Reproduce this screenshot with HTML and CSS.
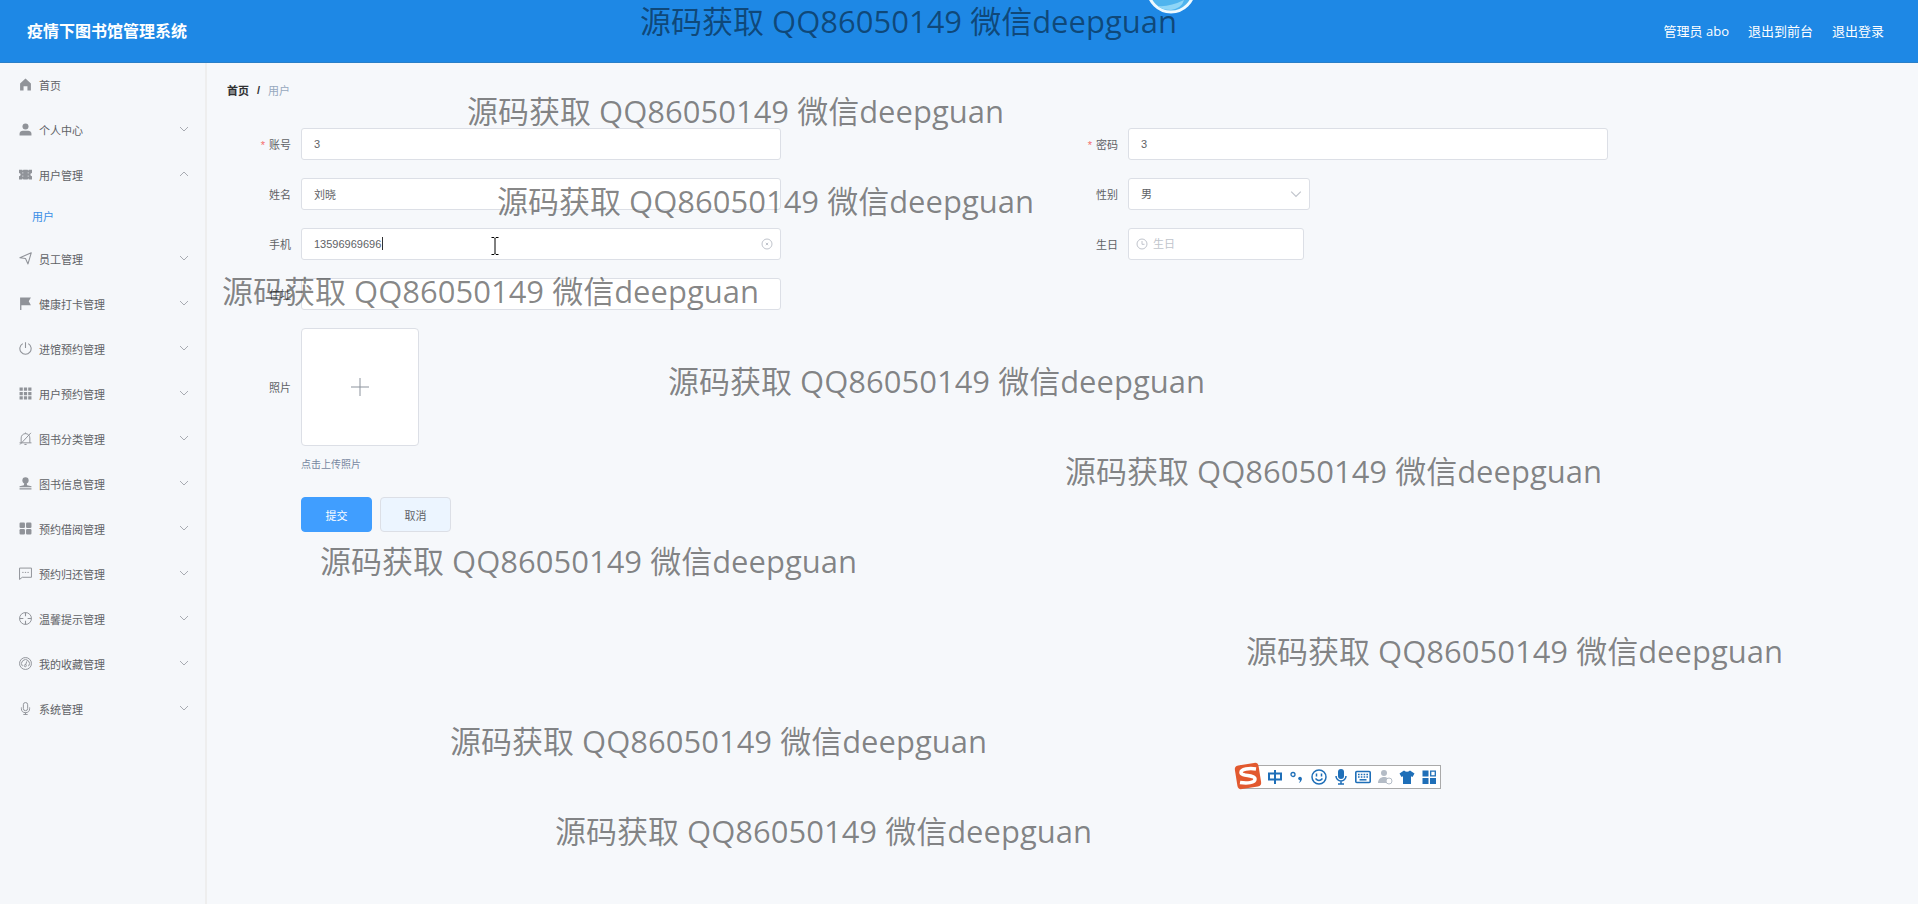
FILE: index.html
```
<!DOCTYPE html>
<html lang="zh-CN">
<head>
    <meta charset="UTF-8">
    <meta name="viewport" content="width=device-width, initial-scale=1.0">
    <title>疫情下图书馆管理系统</title>
    <link rel="stylesheet" href="styles.css">
</head>
<body>

<svg class="sprite" aria-hidden="true">
    <symbol id="down" viewBox="0 0 10 10"><path d="M1 3l4 4 4-4" fill="none" stroke="currentColor"/></symbol>
    <symbol id="up" viewBox="0 0 10 10"><path d="M1 7l4-4 4 4" fill="none" stroke="currentColor"/></symbol>
</svg>

<header class="header">
    <h1 class="title">疫情下图书馆管理系统</h1>
    <nav class="user-nav">
        <span>管理员 abo</span>
        <a href="#">退出到前台</a>
        <a href="#">退出登录</a>
    </nav>
</header>

<div class="container">
    <aside class="sidebar">
        <nav class="menu">
            <a class="menu-item" href="#">
                <svg class="icon" viewBox="0 0 12 12"><path fill="currentColor" d="M6 .5l5 4.500v6.500H7.800V7.500H4.200v4H1V5z"/></svg>
                首页
            </a>
            <a class="menu-item" href="#">
                <svg class="icon" viewBox="0 0 12 12"><circle cx="6" cy="3.300" r="2.800" fill="currentColor"/><path fill="currentColor" d="M.5 11.500V10c0-2 1.500-2.800 3-2.800h5c1.500 0 3 .8 3 2.800v1.500z"/></svg>
                个人中心
                <svg class="arrow"><use href="#down"/></svg>
            </a>
            <a class="menu-item" href="#">
                <svg class="icon" viewBox="0 0 12 12"><path fill="currentColor" d="M0 1.500h3l.5 1 .5-1h4l.5 1 .5-1h3v3a1.500 1.500 0 0 0 0 3v3H9l-.5-1-.5 1H4l-.5-1-.5 1H0v-3a1.500 1.500 0 0 0 0-3z"/><path d="M3.500 4v1m0 2v1m5-4v1m0 2v1" stroke="#f5f7fa" stroke-width=".7"/></svg>
                用户管理
                <svg class="arrow"><use href="#up"/></svg>
            </a>
            <a class="submenu-item" href="#">用户</a>
            <a class="menu-item" href="#">
                <svg class="icon" viewBox="0 0 12 12"><path d="M.8 5.300L11.300.7 8.300 11 6 6z" fill="none" stroke="currentColor" stroke-linejoin="round"/></svg>
                员工管理
                <svg class="arrow"><use href="#down"/></svg>
            </a>
            <a class="menu-item" href="#">
                <svg class="icon" viewBox="0 0 12 12"><path fill="currentColor" d="M1 .5h10L9 4l2 3.500H2.200V12H1z"/></svg>
                健康打卡管理
                <svg class="arrow"><use href="#down"/></svg>
            </a>
            <a class="menu-item" href="#">
                <svg class="icon" viewBox="0 0 12 12"><path d="M3.500 1.500a5.200 5.200 0 1 0 5 0M6 .3v5.200" fill="none" stroke="currentColor"/></svg>
                进馆预约管理
                <svg class="arrow"><use href="#down"/></svg>
            </a>
            <a class="menu-item" href="#">
                <svg class="icon" viewBox="0 0 12 12"><path fill="currentColor" d="M.5.5h3v3h-3zM4.500.5h3v3h-3zM8.500.5h3v3h-3zM.5 4.500h3v3h-3zM4.500 4.500h3v3h-3zM8.500 4.500h3v3h-3zM.5 8.500h3v3h-3zM4.500 8.500h3v3h-3zM8.500 8.500h3v3h-3z"/></svg>
                用户预约管理
                <svg class="arrow"><use href="#down"/></svg>
            </a>
            <a class="menu-item" href="#">
                <svg class="icon" viewBox="0 0 12 12"><path d="M.5 10h11M2 10V5.500a4 4 0 0 1 8 0V10M6 1.500V.5M5 11.500h2M1 11.500L11 .8" fill="none" stroke="currentColor" stroke-width=".9"/></svg>
                图书分类管理
                <svg class="arrow"><use href="#down"/></svg>
            </a>
            <a class="menu-item" href="#">
                <svg class="icon" viewBox="0 0 12 12"><circle cx="6" cy="3.200" r="2.900" fill="currentColor"/><path fill="currentColor" d="M5 5h2l.5 2.500 4 1v1H.5v-1l4-1zM.5 10.300h11v1.200H.5z"/></svg>
                图书信息管理
                <svg class="arrow"><use href="#down"/></svg>
            </a>
            <a class="menu-item" href="#">
                <svg class="icon" viewBox="0 0 12 12"><g fill="currentColor"><rect x=".5" y=".5" width="5" height="5" rx="1"/><rect x="6.500" y=".5" width="5" height="5" rx="1"/><rect x=".5" y="6.500" width="5" height="5" rx="1"/><rect x="6.500" y="6.500" width="5" height="5" rx="1"/></g></svg>
                预约借阅管理
                <svg class="arrow"><use href="#down"/></svg>
            </a>
            <a class="menu-item" href="#">
                <svg class="icon" viewBox="0 0 12 12"><path d="M.5 1h11v8.500H3L.5 11.500zM3 5h1.200M5.400 5h1.200M7.800 5H9" fill="none" stroke="currentColor" stroke-width=".9"/></svg>
                预约归还管理
                <svg class="arrow"><use href="#down"/></svg>
            </a>
            <a class="menu-item" href="#">
                <svg class="icon" viewBox="0 0 12 12"><circle cx="6" cy="6" r="5.500" fill="none" stroke="currentColor" stroke-width=".9"/><path d="M6 .5v3.500M6 8v3.500M.5 6H4M8 6h3.500" stroke="currentColor"/></svg>
                温馨提示管理
                <svg class="arrow"><use href="#down"/></svg>
            </a>
            <a class="menu-item" href="#">
                <svg class="icon" viewBox="0 0 12 12"><circle cx="6" cy="6" r="5.500" fill="none" stroke="currentColor" stroke-width=".9"/><path d="M3.200 8.500a3.700 3.700 0 1 1 5.600 0M7.200 4L6 7.500" fill="none" stroke="currentColor" stroke-width=".9"/><circle cx="5.800" cy="8" r="1" fill="none" stroke="currentColor" stroke-width=".8"/></svg>
                我的收藏管理
                <svg class="arrow"><use href="#down"/></svg>
            </a>
            <a class="menu-item" href="#">
                <svg class="icon" viewBox="0 0 12 12"><rect x="4" y=".5" width="4" height="7.500" rx="2" fill="none" stroke="currentColor" stroke-width=".9"/><path d="M2.200 5v1a3.800 3.800 0 0 0 7.600 0V5M6 9.800v1.700M4 11.500h4" fill="none" stroke="currentColor" stroke-width=".9"/></svg>
                系统管理
                <svg class="arrow"><use href="#down"/></svg>
            </a>
        </nav>
    </aside>

    <main class="main">
        <div class="breadcrumb">
            <a href="#">首页</a>
            <span class="separator">/</span>
            <span class="current">用户</span>
        </div>

        <form class="form">
            <div class="form-item">
                <label class="required" for="account">账号</label>
                <input class="input" type="text" id="account" value="3">
            </div>
            <div class="form-item">
                <label class="required" for="password">密码</label>
                <input class="input" type="text" id="password" value="3">
            </div>
            <div class="form-item">
                <label for="name">姓名</label>
                <input class="input" type="text" id="name" value="刘晓">
            </div>
            <div class="form-item">
                <label for="gender">性别</label>
                <div class="select-box">
                    <select class="input" id="gender">
                        <option>男</option>
                        <option>女</option>
                    </select>
                    <svg class="select-arrow"><use href="#down"/></svg>
                </div>
            </div>
            <div class="form-item">
                <label for="phone">手机</label>
                <div class="phone-box">
                    <input class="input" type="text" id="phone" value="13596969696">
                    <span class="caret"></span>
                    <svg class="clear" viewBox="0 0 12 12"><circle cx="6" cy="6" r="5" fill="none" stroke="currentColor"/><path d="M4.800 4.800l2.400 2.400M7.200 4.800L4.800 7.200" stroke="currentColor"/></svg>
                </div>
            </div>
            <div class="form-item">
                <label for="birthday">生日</label>
                <div class="date-box">
                    <input class="input" type="text" id="birthday" placeholder="生日">
                    <svg class="clock" viewBox="0 0 12 12"><circle cx="6" cy="6" r="5" fill="none" stroke="currentColor"/><path d="M6 3v3.300h2.500" fill="none" stroke="currentColor"/></svg>
                </div>
            </div>
            <div class="form-item wide">
                <label for="address">住址</label>
                <input class="input" type="text" id="address">
            </div>
            <div class="form-item wide">
                <label for="photo">照片</label>
                <button class="upload" type="button" id="photo">
                    <svg viewBox="0 0 18 18"><path d="M9 0v18M0 9h18" stroke="currentColor"/></svg>
                </button>
            </div>
            <div class="tip">点击上传照片</div>
            <div class="buttons">
                <button class="btn btn-primary" type="button">提交</button>
                <button class="btn btn-cancel" type="button">取消</button>
            </div>
        </form>
    </main>
</div>

<!-- floating layer above the page -->
<div class="watermarks">
    <span class="mark mark-1">源码获取 QQ86050149 微信deepguan</span>
    <span class="mark mark-2">源码获取 QQ86050149 微信deepguan</span>
    <span class="mark mark-3">源码获取 QQ86050149 微信deepguan</span>
    <span class="mark mark-4">源码获取 QQ86050149 微信deepguan</span>
    <span class="mark mark-5">源码获取 QQ86050149 微信deepguan</span>
    <span class="mark mark-6">源码获取 QQ86050149 微信deepguan</span>
    <span class="mark mark-7">源码获取 QQ86050149 微信deepguan</span>
    <span class="mark mark-8">源码获取 QQ86050149 微信deepguan</span>
    <span class="mark mark-9">源码获取 QQ86050149 微信deepguan</span>
    <span class="mark mark-10">源码获取 QQ86050149 微信deepguan</span>
</div>

<svg class="ball" viewBox="0 0 50 14">
    <circle cx="25" cy="-11" r="23" fill="#4fb4ee" stroke="#eefaff" stroke-width="3"/>
    <path d="M12 6q12 1 26-6-2 8-13 10-9 0-13-4z" fill="#8fd6f7"/>
</svg>

<svg class="cursor" viewBox="0 0 8 18"><path d="M.5.500h2.500l1 1 1-1h2.500M4 1.500v15M.5 17.500h2.500l1-1 1 1h2.500" fill="none" stroke="#000"/></svg>

<div class="ime">
    <svg class="ime-logo" viewBox="0 0 28 28"><rect x="2" y="2" width="24" height="24" rx="4" fill="#e2592f" transform="rotate(-9 14 14)"/><path d="M22 7C15 6 7 7 7 10.500c0 4 14 2 14 6.500 0 4-8 4.500-15 3.500" fill="none" stroke="#fff" stroke-width="3.500"/></svg>
    <svg viewBox="0 0 16 16"><path d="M2 4.500h12v6H2zM8 1v14" fill="none" stroke="currentColor" stroke-width="2"/></svg>
    <svg viewBox="0 0 16 16"><circle cx="4" cy="5.500" r="2" fill="none" stroke="currentColor" stroke-width="1.300"/><circle cx="11" cy="9.500" r="1.800" fill="currentColor"/><path d="M12.800 9.500q0 3-3 4.500 1.500-2 1.200-3.500z" fill="currentColor"/></svg>
    <svg viewBox="0 0 16 16"><circle cx="8" cy="8" r="7" fill="none" stroke="currentColor" stroke-width="1.500"/><path d="M5.500 4.500v3M10.500 4.500v3M4.500 9.500q3.500 4 7 0" fill="none" stroke="currentColor" stroke-width="1.500"/></svg>
    <svg viewBox="0 0 16 16"><rect x="5" y="0" width="6" height="10" rx="3" fill="currentColor"/><path d="M3 7a5 5 0 0 0 10 0M8 12v3M5 15h6" fill="none" stroke="currentColor" stroke-width="1.500"/></svg>
    <svg viewBox="0 0 16 16"><rect x=".8" y="2.500" width="14.400" height="11" rx="1" fill="none" stroke="currentColor" stroke-width="1.600"/><path d="M3 5.500h10M3 8h10" stroke="currentColor" stroke-width="1.500" stroke-dasharray="1.600 1.200"/><path d="M4.500 10.800h7" stroke="currentColor" stroke-width="1.500"/></svg>
    <svg class="muted" viewBox="0 0 16 16"><circle cx="7" cy="4" r="3" fill="currentColor"/><path d="M1 14c0-4 3-6 6-6 2 0 3 .5 4 1.500L9 14z" fill="currentColor"/><circle cx="12" cy="12" r="3" fill="#fff" stroke="currentColor"/></svg>
    <svg viewBox="0 0 16 16"><path d="M5 1.500q3 2.500 6 0l4.500 3-2 3.500-1.500-.8V15H4V7.200L2.500 8l-2-3.500z" fill="currentColor"/></svg>
    <svg viewBox="0 0 16 16"><path d="M1.500 1.500h6v6h-6zM1.500 9h6v6h-6zM9 9h6v6H9z" fill="currentColor"/><path d="M9.700 2.200h4.600v4.600H9.700z" fill="none" stroke="currentColor" stroke-width="1.300"/></svg>
</div>

</body>
</html>
```
FILE: styles.css
```
* {
    box-sizing: border-box;
}
body {
    margin: 0;
    min-height: 100vh;
    display: flex;
    flex-direction: column;
    font-family: "Liberation Sans", "Noto Sans CJK SC", sans-serif;
    font-size: 11px;
    color: #606266;
    background-color: #f6f8fb;
}
a {
    color: inherit;
    text-decoration: none;
}
.sprite {
    display: none;
}
.header {
    height: 63px;
    padding: 0 34px 2px 27px;
    display: flex;
    align-items: center;
    justify-content: space-between;
    color: #fff;
    background-color: #1e88e5;
    border-bottom: 1px solid #2a7fc8;
}
.title {
    margin: 0;
    font-size: 16px;
}
.user-nav {
    display: flex;
    gap: 19px;
    font-family: "Open Sans", "Noto Sans CJK SC", sans-serif;
    font-size: 13px;
}
.container {
    display: flex;
    flex-grow: 1;
}
.sidebar {
    width: 207px;
    flex-shrink: 0;
    background-color: #f5f7fa;
    border-right: 2px solid #eee;
}
.menu-item {
    height: 45px;
    padding: 0 16px 2px 19px;
    display: flex;
    align-items: center;
}
.icon {
    width: 13px;
    height: 13px;
    margin-right: 7px;
    color: #909399;
}
.arrow {
    width: 10px;
    height: 10px;
    margin-left: auto;
    margin-bottom: 2px;
    color: #a8abb2;
}
.submenu-item {
    display: block;
    height: 39px;
    padding-left: 32px;
    line-height: 39px;
    color: #3a8ee6;
}
.main {
    flex-grow: 1;
    padding: 19px 37px 20px 20px;
}
.breadcrumb {
    height: 16px;
    display: flex;
    align-items: center;
    gap: 8px;
    font-weight: bold;
    color: #303133;
}
.breadcrumb .current {
    font-weight: normal;
    color: #97a8be;
}
.form {
    margin-top: 30px;
    display: grid;
    grid-template-columns: 1fr 1fr;
    row-gap: 18px;
}
.form-item {
    display: flex;
    align-items: center;
}
.wide, .tip, .buttons {
    grid-column: 1 / 3;
}
.form-item label {
    width: 74px;
    padding-right: 10px;
    text-align: right;
}
.required::before {
    content: "*";
    margin-right: 4px;
    color: #f56c6c;
}
.input {
    width: 480px;
    height: 32px;
    padding: 0 12px;
    font-family: inherit;
    font-size: 11px;
    color: #606266;
    background-color: #fff;
    border: 1px solid #dcdfe6;
    border-radius: 3px;
    outline: none;
    appearance: none;
}
.input::placeholder {
    color: #c0c4cc;
}
.select-box, .date-box, .phone-box {
    position: relative;
    display: flex;
}
.select-box .input {
    width: 182px;
}
.date-box .input {
    width: 176px;
    padding-left: 24px;
}
.select-arrow, .clear, .clock {
    position: absolute;
    top: 10px;
    width: 12px;
    height: 12px;
    color: #c0c4cc;
}
.select-arrow {
    right: 8px;
}
.clear {
    right: 8px;
}
.clock {
    left: 8px;
}
.caret {
    position: absolute;
    left: 81px;
    top: 9px;
    width: 1px;
    height: 13px;
    background-color: #303133;
}
.upload {
    width: 118px;
    height: 118px;
    padding: 0;
    display: flex;
    align-items: center;
    justify-content: center;
    color: #8c939d;
    background-color: #fff;
    border: 1px solid #dcdfe6;
    border-radius: 4px;
}
.upload svg {
    width: 18px;
    height: 18px;
}
.tip {
    margin-left: 74px;
    margin-top: -7px;
    font-size: 10px;
    line-height: 16px;
    color: #7687a0;
}
.buttons {
    margin-left: 74px;
    margin-top: 6px;
    display: flex;
    gap: 8px;
}
.btn {
    width: 71px;
    height: 35px;
    padding: 0;
    font-family: inherit;
    font-size: 11px;
    border-radius: 4px;
}
.btn-primary {
    color: #fff;
    background-color: #409eff;
    border: 1px solid #409eff;
}
.btn-cancel {
    color: #606266;
    background-color: #ecf5ff;
    border: 1px solid #dcdfe6;
}
.watermarks {
    position: absolute;
    top: 0;
    left: 0;
    pointer-events: none;
}
.mark {
    position: absolute;
    font-family: "Open Sans", "Noto Sans CJK SC", sans-serif;
    font-size: 31px;
    line-height: 40px;
    white-space: nowrap;
    color: rgba(0, 0, 0, 0.48);
}
.mark-1 { left: 640px; top: 1px; }
.mark-2 { left: 467px; top: 91px; }
.mark-3 { left: 497px; top: 181px; }
.mark-4 { left: 222px; top: 271px; }
.mark-5 { left: 668px; top: 361px; }
.mark-6 { left: 1065px; top: 451px; }
.mark-7 { left: 320px; top: 541px; }
.mark-8 { left: 1246px; top: 631px; }
.mark-9 { left: 450px; top: 721px; }
.mark-10 { left: 555px; top: 811px; }
.ball {
    position: absolute;
    left: 1146px;
    top: 0;
    width: 50px;
    height: 14px;
}
.cursor {
    position: absolute;
    left: 491px;
    top: 237px;
    width: 8px;
    height: 18px;
}
.ime {
    position: absolute;
    left: 1240px;
    top: 765px;
    height: 24px;
    padding: 0 3px 0 26px;
    display: flex;
    align-items: center;
    gap: 6px;
    color: #1f6fb8;
    background-color: #fff;
    border: 1px solid #aaa;
}
.ime svg {
    width: 16px;
    height: 16px;
}
.ime .ime-logo {
    position: absolute;
    left: -7px;
    top: -4px;
    width: 28px;
    height: 28px;
}
.ime .muted {
    color: #b4bcc6;
}
```
